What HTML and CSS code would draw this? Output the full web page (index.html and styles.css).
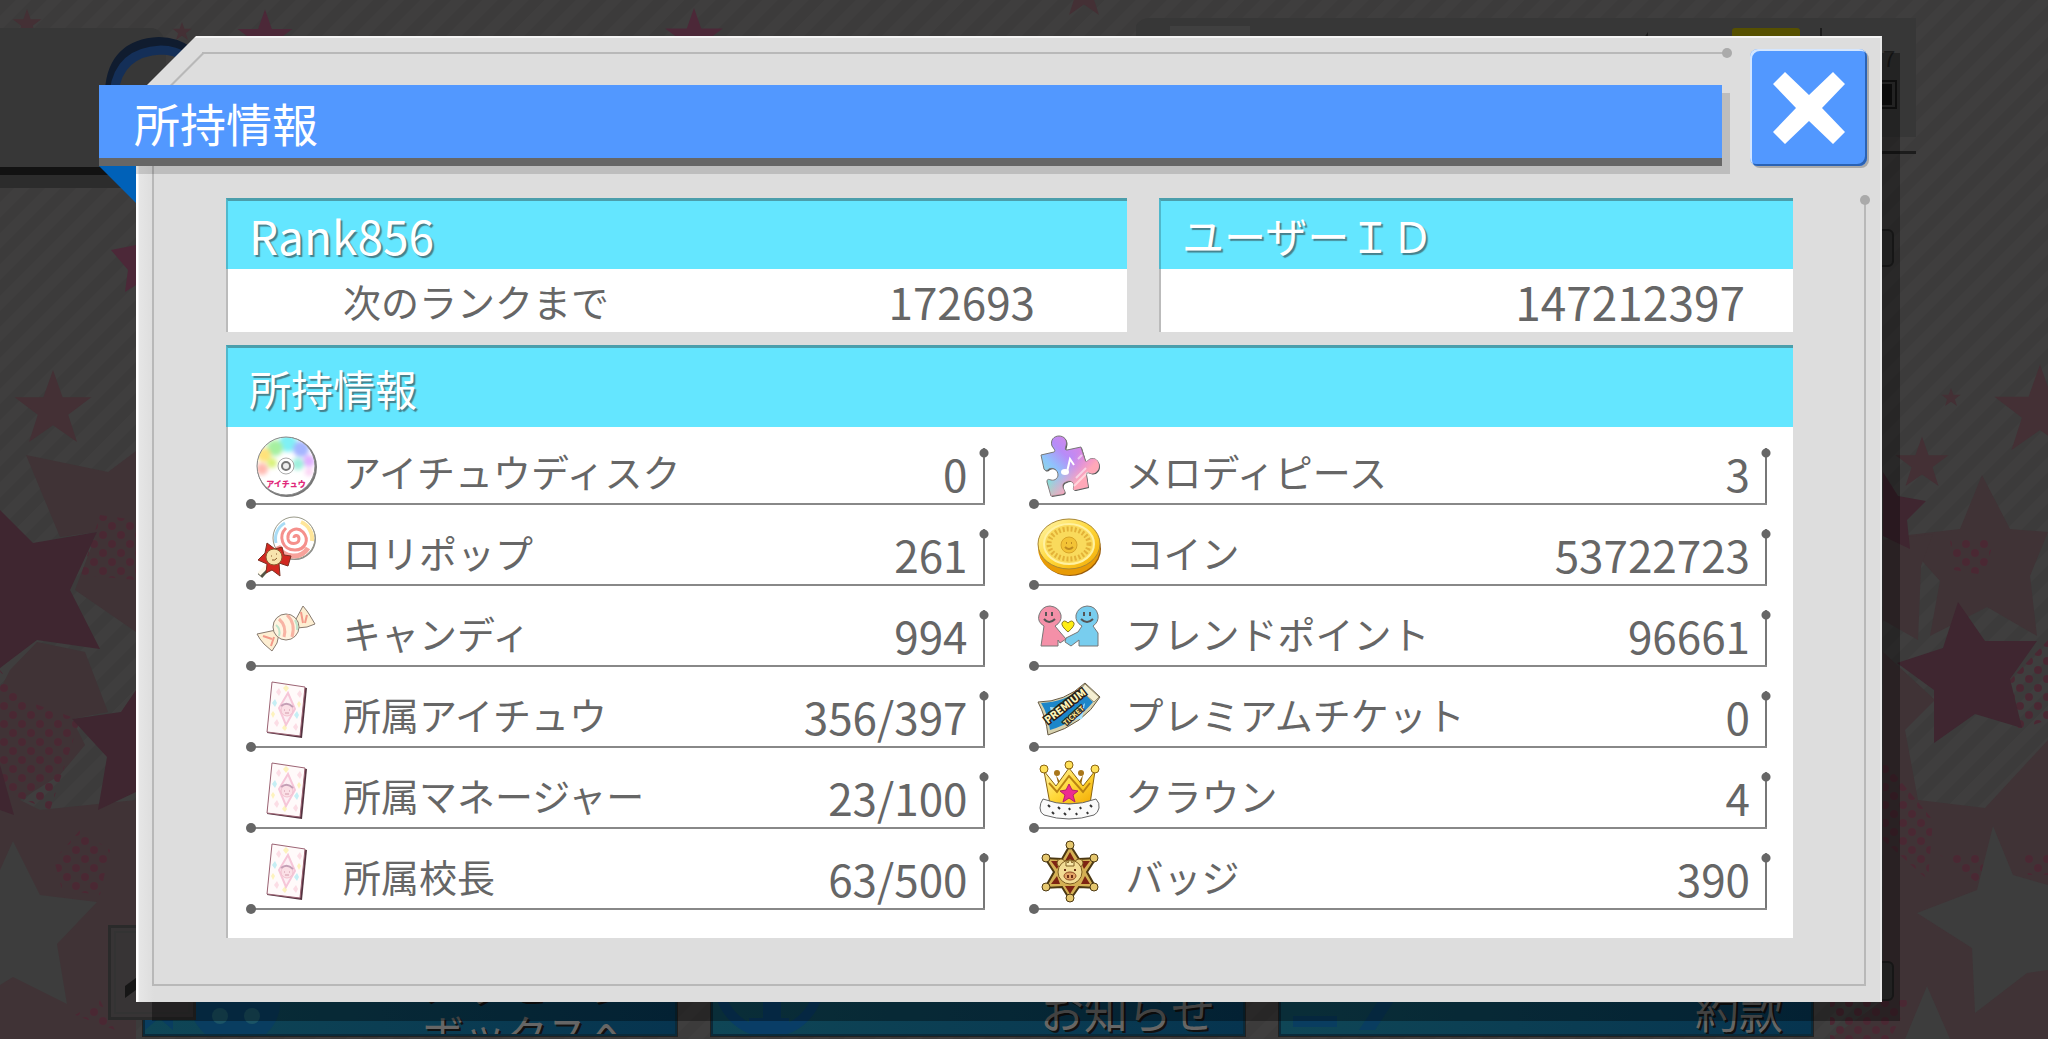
FILE: index.html
```html
<!DOCTYPE html>
<html lang="ja">
<head>
    <meta charset="UTF-8">
    <meta name="viewport" content="width=device-width, initial-scale=1.0">
    <title>所持情報</title>
    <link rel="stylesheet" href="styles.css">
</head>
<body>
    <!-- Dimmed screen behind the dialog -->
    <div class="backdrop">
        <svg class="scenery" viewBox="0 0 2048 1039" preserveAspectRatio="xMidYMid slice" aria-hidden="true">
            <defs>
                <pattern id="dots" width="18" height="18" patternUnits="userSpaceOnUse">
                    <circle cx="4" cy="4" r="4" fill="#4a2833"/>
                    <circle cx="13" cy="13" r="4" fill="#4a2833"/>
                </pattern>
                <pattern id="stripes" width="22" height="22" patternUnits="userSpaceOnUse" patternTransform="rotate(45)">
                    <rect width="22" height="22" fill="#3f3e3e"/>
                    <rect width="11" height="22" fill="#3c3b3b"/>
                </pattern>
                <polygon id="star" points="0,-50 12,-16 48,-16 19,6 30,40 0,19 -30,40 -19,6 -48,-16 -12,-16"/>
            </defs>
            <rect width="2048" height="1039" fill="url(#stripes)"/>
            <g fill="#4c2838">
                <use href="#star" transform="translate(265 38) scale(.57)"/>
                <use href="#star" transform="translate(694 38) scale(.6)"/>
                <path d="M111 250l25-5v40l-11 7 3-22z"/>
            </g>
            <g fill="#443035">
                <use href="#star" transform="translate(27 24) scale(.3)"/>
                <use href="#star" transform="translate(182 32) scale(.2)"/>
                <use href="#star" transform="translate(1084 -5) scale(.5)"/>
                <use href="#star" transform="translate(53 410) scale(.8)"/>
                <use href="#star" transform="translate(1951 398) scale(.2)"/>
                <use href="#star" transform="translate(1922 464) scale(.55)"/>
                <use href="#star" transform="translate(2040 412) scale(.95)"/>
            </g>
            <g fill="#403336">
                <path d="M26 455l82 17 28-21v181l-61-42 22-58-37 5z"/>
                <path d="M10 670l27-28 48 10 23 60-36 7 13 26-25 30-40 25-20-10V690z"/>
                <path d="M0 790l40 20 96-10v239H0z"/>
                <path d="M1982 475l28 54 38 3-18 44 7 60-50-29-57 29 10-55-40-45 60-7z"/>
                <path d="M1883 540l50-6-12 32-3 74-35-20zM1883 652l52 48-30 30 13 70 67 8 63-68v299h-218l53-39z"/>
            </g>
            <g fill="url(#dots)">
                <path d="M100 515l36 5v60l-55-5zM0 670l24 30 56 20-30 90-50-20zM80 830l30 20-10 45-38-5-8-30zM100 1000l15 30-40-15z"/>
                <path d="M1950 540h44l-10 35-30-5zM1883 760l50 60-5 60-45-40zM2010 680l38-40v80l-30 10zM1940 855h45l-5 30zM2020 855h28v20h-20zM1830 1000h80l-20 39h-60z"/>
            </g>
            <g fill="#3f2630">
                <path d="M0 510l33 33 64-11-27 58 30 59-63-9-37 28z"/>
                <path d="M136 690l-15 22-49 7 35 38-9 53 38-18zM0 765l14 50-14-5z"/>
                <path d="M1883 472l15 24 28 5-19 19 3 29-27-13z"/>
                <path d="M1958 602l27 39h52l-27 38 12 49-47-14-41 29v-53l-37-27 46-15z"/>
            </g>
            <g fill="#3d3d3d">
                <path d="M13 841l27 54 57 7-40 42 10 60-54-27-13 8V870z"/>
                <path d="M1993 826l20 49 35 10v85l-21 3-52 40-3-65-55-35 60-23zM1927 986l23 53h-45z"/>
            </g>
            <!-- top bar pieces -->
            <path d="M0 28h150q14 0 16 20v119H0z" fill="#373737"/>
            <path d="M0 167h140v8H0z" fill="#121212"/>
            <path d="M0 175h140v13H0z" fill="#2c2c2c"/>
            <path d="M112 90q3-44 47-46 16 0 30 10" fill="none" stroke="#101c2f" stroke-width="14"/>
            <path d="M114 92q5-40 47-42 14 0 26 8" fill="none" stroke="#142f58" stroke-width="9"/>
            <path d="M1136 26q4-8 14-8h766v119H1136z" fill="#373737"/>
            <path d="M1170 26h80v12h-80z" fill="#404040"/>
            <rect x="1732" y="28" width="68" height="12" rx="3" fill="#565000"/>
            <path d="M1820 28h2v10h-2zM1882 151h34v3h-34zM1644 38l4-6v6z" fill="#1c1c1c"/>
            <path d="M1860 81h36v27h-36z" fill="none" stroke="#161616" stroke-width="2"/>
            <path d="M1860 84h32v21h-32z" fill="#111"/>
            <text x="1883" y="67" font-size="22" fill="#1c1c1c">7</text>
            <rect x="1850" y="230" width="43" height="36" rx="5" fill="#333" stroke="#222" stroke-width="2"/>
            <rect x="1850" y="962" width="43" height="38" rx="5" fill="#333" stroke="#222" stroke-width="2"/>
        </svg>
        <nav class="menu">
            <button class="menu-item menu-message">
                <svg width="140" height="80" viewBox="0 0 140 80" aria-hidden="true"><path d="M0 48l16 14 12-10v24L14 64 0 76z" fill="#093d60"/><path d="M45 0h90v50q0 16-14 30H60Q45 66 45 50z" fill="#093d60"/><circle cx="75" cy="62" r="8" fill="#1b5466"/><circle cx="107" cy="62" r="8" fill="#1b5466"/></svg>
                <span>メッセージ<br>ボックスへ</span>
            </button>
            <button class="menu-item">
                <svg width="130" height="80" viewBox="0 0 130 80" aria-hidden="true"><circle cx="56" cy="28" r="50" fill="none" stroke="#093d66" stroke-width="10"/><path d="M40 30h28v34h8v9H36v-9h14V40H40z" fill="#093d66"/></svg>
                <span>お知らせ</span>
            </button>
            <button class="menu-item">
                <svg width="140" height="80" viewBox="0 0 140 80" aria-hidden="true"><path d="M12 36h60v11H12zM12 62h44v11H12zM78 76l38-58h16L94 76z" fill="#093d60"/></svg>
                <span>約款</span>
            </button>
        </nav>
        <div class="back-box">
            <svg width="60" height="40" viewBox="0 0 60 40" aria-hidden="true"><path d="M0 24L30 2v12L0 36z" fill="#161616"/></svg>
        </div>
    </div>

    <!-- Dialog -->
    <main class="dialog">
        <div class="panel-shadow"></div>
        <div class="panel"></div>
        <div class="frame-top"></div>
        <div class="frame-corner"></div>
        <div class="frame-body"></div>
        <div class="frame-right"></div>

        <header class="dialog-head">
            <h1>所持情報</h1>
            <button class="close" aria-label="閉じる">
                <svg width="76" height="76" viewBox="0 0 76 76" aria-hidden="true"><path d="M14 2l24 23L62 2l12 12-23 24 23 24-12 12-24-23-24 23L2 62l23-24L2 14z" fill="#fff"/></svg>
            </button>
        </header>

        <div class="cards">
            <section class="card">
                <h2 class="rank-title">Rank856</h2>
                <p class="summary rank"><span>次のランクまで</span><span class="num">172693</span></p>
            </section>
            <section class="card">
                <h2>ユーザーＩＤ</h2>
                <p class="summary user"><span class="user-id">147212397</span></p>
            </section>
            <section class="card wide">
                <h2>所持情報</h2>
                <dl class="items">
                    <div class="item">
                        <dt>
                            <svg class="icon" viewBox="0 0 62 62" aria-hidden="true">
                                <defs>
                                    <clipPath id="discClip"><circle cx="31" cy="31" r="29"/></clipPath>
                                    <filter id="soft"><feGaussianBlur stdDeviation="2"/></filter>
                                </defs>
                                <circle cx="32" cy="32" r="30" fill="#777"/>
                                <circle cx="31" cy="31" r="29" fill="#fff"/>
                                <g clip-path="url(#discClip)" filter="url(#soft)">
                                    <circle cx="33" cy="8" r="9" fill="#7ff0f5"/><circle cx="20" cy="13" r="8" fill="#a6f0a0"/>
                                    <circle cx="9" cy="20" r="7" fill="#ffe27a"/><circle cx="7" cy="34" r="6" fill="#ffb9b0"/>
                                    <circle cx="17" cy="28" r="5" fill="#d9f37a"/><circle cx="46" cy="14" r="8" fill="#a5b5ff"/>
                                    <circle cx="54" cy="26" r="6" fill="#e0b0ff"/><circle cx="43" cy="29" r="6" fill="#9df0dd"/>
                                    <circle cx="54" cy="37" r="4" fill="#fbd3f4"/>
                                </g>
                                <circle cx="31" cy="31" r="29" fill="none" stroke="#888"/>
                                <circle cx="31" cy="31" r="8" fill="#fff" stroke="#aaa"/><circle cx="31" cy="31" r="4" fill="#eee" stroke="#777" stroke-width="2"/>
                                <text x="31" y="52" text-anchor="middle" font-size="8" font-weight="900" fill="#e0287a">アイチュウ</text>
                            </svg>
                            アイチュウディスク
                        </dt>
                        <dd>0</dd>
                    </div>
                    <div class="item">
                        <dt>
                            <svg class="icon" viewBox="0 0 62 62" aria-hidden="true">
                                <path d="M28 35L5 60" stroke="#554" stroke-width="6"/><path d="M28 34L4 58" stroke="#fff8e8" stroke-width="4"/>
                                <circle cx="40" cy="23" r="21" fill="#888"/>
                                <circle cx="39" cy="22" r="21" fill="#fff" stroke="#998"/>
                                <path d="M39 22c0-4 5-3 5 1 0 6-10 6-11 0-1-9 9-13 15-7 7 8 2 18-8 18-13 0-17-14-9-22" fill="none" stroke="#f5908c" stroke-width="3"/>
                                <path d="M23 30A17 17 0 0 0 53 32" fill="none" stroke="#f7a29b" stroke-width="5"/>
                                <path d="M57 25A18 18 0 0 0 46 6" fill="none" stroke="#ffe69a" stroke-width="4"/>
                                <path d="M21 27A18 18 0 0 1 30 7" fill="none" stroke="#a9dcf5" stroke-width="3"/>
                                <path d="M12 27l8 6 7-2 2 8 7 1-3 10-9-3 1 13-8-6-6 3 1-9-9-4 7-7z" fill="#d22820" stroke="#7c3022"/>
                                <circle cx="19" cy="41" r="8" fill="#f8e4ad" stroke="#8a5b2e"/>
                                <path d="M16 40h1M21 38h1M17 44q3 1 5-2" stroke="#8a5b2e" fill="none"/>
                            </svg>
                            ロリポップ
                        </dt>
                        <dd>261</dd>
                    </div>
                    <div class="item">
                        <dt>
                            <svg class="icon" viewBox="0 0 62 62" aria-hidden="true">
                                <g stroke="#887b70" stroke-linejoin="round">
                                    <path d="M40 24l8-15 4 5 2 3 6 10-8 3-10 1z" fill="#fdeed2"/>
                                    <path d="M21 33L2 37l3 5 4 5 8 7 5-8 2-9z" fill="#fdeed2"/>
                                    <circle cx="31" cy="30" r="13" fill="#fff4e0"/>
                                </g>
                                <path d="M24 22q8 7 5 18M32 18q9 8 5 22" fill="none" stroke="#f8b4a4" stroke-width="3"/>
                                <path d="M21 28q5 4 3 11M40 23q3 5 2 10" fill="none" stroke="#bfe4cb" stroke-width="2"/>
                                <path d="M46 15l2 11M52 18l-2 8M8 39l9 3M16 49l3-9" stroke="#f39a8a" stroke-width="2"/>
                            </svg>
                            キャンディ
                        </dt>
                        <dd>994</dd>
                    </div>
                    <div class="item">
                        <dt>
                            <svg class="icon" viewBox="0 0 62 62" aria-hidden="true">
                                <g id="idolCard">
                                    <path d="M18 5l34 5-5 50-35-5z" fill="#54323f"/>
                                    <path d="M17 4l33 5-5 49-33-4z" fill="#fffafa" stroke="#9c6474"/>
                                    <path d="M21 14l3-4 2 4-2 4zM42 16l3-4 2 4-2 4zM19 45l3-4 2 4-2 4zM38 49l3-4 2 4-2 4z" fill="#fcdde5"/>
                                    <path d="M17 25l3-4 2 4-2 4zM39 37l3-4 2 4-2 4z" fill="#c6eff5"/>
                                    <path d="M28 10l3-3 3 3-3 4zM42 26l2-3 2 3-2 4zM16 36l2-3 2 3-2 4zM27 50l3-4 2 4-2 3z" fill="#fdf3be"/>
                                    <path d="M33 15l7 16-9 16-7-17z" fill="#fdeff4" stroke="#f6c6d8" stroke-width="2"/>
                                    <circle cx="32" cy="32" r="6" fill="#fbdfe6" stroke="#f2c1ce"/>
                                    <path d="M26 28q6-5 12 1" fill="none" stroke="#c5a0b6" stroke-width="2"/>
                                    <path d="M29 32h1M34 32h1M30 35h4" stroke="#d29aaa"/>
                                </g>
                            </svg>
                            所属アイチュウ
                        </dt>
                        <dd>356/397</dd>
                    </div>
                    <div class="item">
                        <dt>
                            <svg class="icon" viewBox="0 0 62 62" aria-hidden="true"><use href="#idolCard"/></svg>
                            所属マネージャー
                        </dt>
                        <dd>23/100</dd>
                    </div>
                    <div class="item">
                        <dt>
                            <svg class="icon" viewBox="0 0 62 62" aria-hidden="true"><use href="#idolCard"/></svg>
                            所属校長
                        </dt>
                        <dd>63/500</dd>
                    </div>
                    <div class="item">
                        <dt>
                            <svg class="icon" viewBox="0 0 62 62" aria-hidden="true">
                                <defs>
                                    <linearGradient id="puzzle" x1="0" y1="1" x2="1" y2="0">
                                        <stop offset="0" stop-color="#8ff5b5"/><stop offset=".35" stop-color="#8ec5fb"/>
                                        <stop offset=".55" stop-color="#b78cf8"/><stop offset="1" stop-color="#ff7fd0"/>
                                    </linearGradient>
                                    <linearGradient id="puzzleWarm" x1="0" y1="0" x2="1" y2="1">
                                        <stop offset=".45" stop-color="#ff90c8" stop-opacity="0"/><stop offset=".7" stop-color="#ffa8b8"/>
                                    </linearGradient>
                                    <path id="piece" d="M3 20l13-3c2-1 0-3-2-6-2-6 2-10 7-10s9 4 7 10c-1 3-1 4 1 4l14-3 4 13c1 3 2 1 5-1 5-2 9 2 9 7s-5 9-9 7c-2-1-4-1-4 1l2 13-13 3c-2 0-2-1-1-4 0-5-5-6-8-4-4 1-4 5-2 8 1 2 1 3-1 4l-12 2-4-14c0-3 1-3 4-2 4 1 7-2 7-5 0-5-5-8-9-6-2 2-4 2-5 0z"/>
                                </defs>
                                <use href="#piece" x="1" y="1" fill="#555"/>
                                <use href="#piece" fill="url(#puzzle)" stroke="#777"/>
                                <use href="#piece" fill="url(#puzzleWarm)"/>
                                <path d="M36 51l14-14M38 43l10-10M40 24l4-4" stroke="#fff" stroke-opacity=".5" stroke-width="2"/>
                                <ellipse cx="27" cy="37" rx="4" ry="3" fill="#fff"/><path d="M29 37l3-13 4 6" fill="none" stroke="#fff" stroke-width="2"/>
                            </svg>
                            メロディピース
                        </dt>
                        <dd>3</dd>
                    </div>
                    <div class="item">
                        <dt>
                            <svg class="icon" viewBox="0 0 62 62" aria-hidden="true">
                                <defs>
                                    <linearGradient id="gold" x1="0" y1="0" x2="1" y2="1">
                                        <stop offset="0" stop-color="#fff6b0"/><stop offset=".5" stop-color="#ffd83a"/><stop offset="1" stop-color="#f2a800"/>
                                    </linearGradient>
                                </defs>
                                <ellipse cx="32" cy="33" rx="31" ry="27" fill="#9a5c0a"/>
                                <ellipse cx="31" cy="32" rx="31" ry="27" fill="#e89b06"/>
                                <ellipse cx="31" cy="28" rx="31" ry="25" fill="url(#gold)" stroke="#a98733"/>
                                <ellipse cx="31" cy="28" rx="25" ry="20" fill="#f9da5c" stroke="#fff1a0" stroke-width="2"/>
                                <ellipse cx="31" cy="28" rx="20" ry="15" fill="none" stroke="#e3b238" stroke-width="5" stroke-dasharray="2 2"/>
                                <circle cx="31" cy="29" r="8" fill="#f3c336" stroke="#d8a428"/>
                                <path d="M28 27h1M33 27h1M27 31q4 4 8 0" fill="none" stroke="#c08c20" stroke-width="2"/>
                            </svg>
                            コイン
                        </dt>
                        <dd>53722723</dd>
                    </div>
                    <div class="item">
                        <dt>
                            <svg class="icon" viewBox="0 0 62 62" aria-hidden="true">
                                <path d="M6 29Q-1 25 1 18q3-9 11-9 9 1 11 9 1 7-6 11l5 6 6 7-6 4-2-3v6H3z" fill="#f490a8" stroke="#777"/>
                                <path d="M44 29q-7-4-6-11 2-8 11-9 9 0 11 9 1 7-5 11l5 7v13H41v-6l-8 6-6-4 1-4 12-6z" fill="#78cdee" stroke="#777"/>
                                <path d="M6 22q5 6 11 0M43 22q6 6 12 0" fill="none" stroke="#555" stroke-width="2"/>
                                <path d="M8 15v4M14 15v4M46 15v4M52 15v4" stroke="#555" stroke-width="2"/>
                                <path d="M30 35q-7-6-6-9 2-4 6 0 4-4 6 0 1 3-6 9z" fill="#ffee12" stroke="#887a20"/>
                            </svg>
                            フレンドポイント
                        </dt>
                        <dd>96661</dd>
                    </div>
                    <div class="item">
                        <dt>
                            <svg class="icon" viewBox="0 0 62 62" aria-hidden="true">
                                <path d="M0 24q27 0 47-19l15 14Q46 46 10 57q-2-18-10-33z" fill="#d7d1ae" stroke="#665a44"/>
                                <path d="M3 25q24-1 39-14l13 13Q39 44 12 52 10 36 3 25z" fill="#1c86c9"/>
                                <path d="M12 29l10 1-8 9zM30 42l17-17-3 16z" fill="#a6e1fa"/>
                                <path d="M47 6l14 13-5 5-14-12z" fill="#f5efd2" stroke="#998f70"/>
                                <text x="10" y="46" transform="rotate(-38 10 46)" font-size="10" font-weight="900" fill="#fff4b8" stroke="#262018" stroke-width="3" paint-order="stroke">PREMIUM</text>
                                <text x="28" y="48" transform="rotate(-42 28 48)" font-size="7" font-weight="900" fill="#f1dc8c" stroke="#262018" stroke-width="2" paint-order="stroke">TICKET</text>
                            </svg>
                            プレミアムチケット
                        </dt>
                        <dd>0</dd>
                    </div>
                    <div class="item">
                        <dt>
                            <svg class="icon" viewBox="0 0 62 62" aria-hidden="true">
                                <path d="M18 16l4 16h20l3-16-7 12H25z" fill="#9c6c12"/>
                                <circle cx="19" cy="14" r="3" fill="#a9761a"/><circle cx="43" cy="14" r="3" fill="#a9761a"/>
                                <path d="M6 12l12 15L31 9l14 18 12-15-5 33H12z" fill="url(#gold)" stroke="#8a6412"/>
                                <path d="M11 24l8 9 12-16 14 16 7-9" fill="none" stroke="#b98212" stroke-width="2"/>
                                <circle cx="6" cy="10" r="4" fill="#ffe15a" stroke="#8a6412"/><circle cx="31" cy="6" r="4" fill="#ffe15a" stroke="#8a6412"/><circle cx="57" cy="10" r="4" fill="#ffe15a" stroke="#8a6412"/>
                                <path d="M31 25l3 6 6 1-5 4 2 7-6-4-6 4 2-7-5-4 6-1z" fill="#ee2a91" stroke="#b32069"/>
                                <path d="M5 40q26 10 53 0 4 4 3 9t-5 7q-25 8-50 0-4-2-4-7t3-9z" fill="#fafafa" stroke="#666"/>
                                <path d="M10 46l2 2M20 48l2 2M31 49l1 2M42 48l1 2M52 46l2 2M14 53l2 2M26 54l2 2M38 54l1 2M49 53l1 2" stroke="#333" stroke-width="2"/>
                            </svg>
                            クラウン
                        </dt>
                        <dd>4</dd>
                    </div>
                    <div class="item">
                        <dt>
                            <svg class="icon" viewBox="0 0 62 62" aria-hidden="true">
                                <path d="M32 5l9 14 17-1-9 14 9 16-17-1-9 13-8-13-17 1 9-16-9-14 17 1z" fill="#d4b054" stroke="#4c3812" stroke-width="2"/>
                                <path d="M32 12l5 9H27zM13 21h10l-4 8zM52 21H42l4 8zM13 44h9l-3-8zM52 44h-9l4-8zM32 54l5-8H27z" fill="#7d2413"/>
                                <g fill="#e5c76e" stroke="#4c3812"><circle cx="32" cy="5" r="4"/><circle cx="8" cy="18" r="4"/><circle cx="56" cy="18" r="4"/><circle cx="8" cy="47" r="4"/><circle cx="56" cy="47" r="4"/><circle cx="32" cy="58" r="4"/></g>
                                <circle cx="23" cy="23" r="4" fill="#e9cf80" stroke="#7d5c20"/><circle cx="41" cy="23" r="4" fill="#e9cf80" stroke="#7d5c20"/>
                                <circle cx="32" cy="32" r="12" fill="#f2dc94" stroke="#7d5c20"/>
                                <path d="M28 20l2 3 2-4 2 4 2-3v6h-8z" fill="#f8e8a8" stroke="#7d5c20"/>
                                <ellipse cx="32" cy="36" rx="6" ry="4" fill="#e2a465" stroke="#8c4a24"/><path d="M30 35v3M34 35v3M26 30h2M36 30h2" stroke="#6d3018" stroke-width="2"/>
                            </svg>
                            バッジ
                        </dt>
                        <dd>390</dd>
                    </div>
                </dl>
            </section>
        </div>
    </main>
</body>
</html>
```

FILE: styles.css
```css
* {
    box-sizing: border-box;
}
body {
    font-family: "Noto Sans CJK JP", sans-serif;
    background-color: #3d3d3d;
    color: #666;
    margin: 0;
    padding: 0;
    min-height: 100vh;
    position: relative;
    overflow: hidden;
}
h1, h2, p, dl, dd {
    margin: 0;
    font-weight: 400;
}
button {
    font-family: inherit;
    border: 0;
    padding: 0;
    cursor: pointer;
}

/* screen behind */
.backdrop {
    position: absolute;
    inset: 0;
    overflow: hidden;
}
.scenery {
    display: block;
    width: 100%;
    height: 100%;
}
.menu {
    position: absolute;
    left: 143px;
    right: 235px;
    bottom: 3px;
    display: grid;
    grid-template-columns: repeat(3, 1fr);
    gap: 34px;
}
.menu-item {
    display: flex;
    justify-content: space-between;
    align-items: flex-end;
    height: 84px;
    padding: 0 28px 0 0;
    overflow: hidden;
    color: #666;
    font-size: 44px;
    line-height: 48px;
    text-shadow: 2px 2px 0 #111;
    background: linear-gradient(90deg, #0f4656, #06344f);
    border: 2px solid #0a2a3a;
    outline: 1px solid #222;
}
.menu-message {
    font-size: 42px;
    line-height: 50px;
}
.menu-message span {
    margin-right: 16px;
    margin-bottom: -24px;
    text-align: left;
}
.back-box {
    position: absolute;
    left: 108px;
    bottom: 19px;
    width: 88px;
    height: 95px;
    padding: 34px 14px;
    background-color: #373435;
    border: 3px solid #2a2a2a;
    outline: 2px solid #333;
    outline-offset: -8px;
}

/* dialog */
.dialog {
    position: relative;
    margin: 36px 166px 0 136px;
    padding-bottom: 64px;
}
.panel-shadow {
    position: absolute;
    inset: 17px -18px -19px 16px;
    background-color: rgba(0, 0, 0, 0.35);
    clip-path: polygon(60px 0, 100% 0, 100% 100%, 0 100%, 0 60px);
}
.panel {
    position: absolute;
    inset: 0;
    background: linear-gradient(90deg, #fff 2px, #e6e6e6 3px, #ddd 18px);
    border-top: 2px solid #f4f4f4;
    border-right: 2px solid #e8e8e8;
    clip-path: polygon(60px 0, 100% 0, 100% 100%, 0 100%, 0 60px);
}
.frame-top {
    position: absolute;
    top: 16px;
    left: 66px;
    right: 154px;
    height: 2px;
    background-color: #b8b8b8;
}
.frame-top::after, .frame-right::after {
    content: "";
    position: absolute;
    top: -4px;
    right: -4px;
    width: 10px;
    height: 10px;
    border-radius: 50%;
    background-color: #aaa;
}
.frame-corner {
    position: absolute;
    top: 16px;
    left: 20px;
    width: 47px;
    height: 2px;
    background-color: #b8b8b8;
    transform: rotate(-45deg);
    transform-origin: right top;
}
.frame-body {
    position: absolute;
    inset: 120px 17px 16px 16px;
    border: solid #b8b8b8;
    border-width: 0 0 2px 2px;
}
.frame-right {
    position: absolute;
    top: 163px;
    right: 16px;
    bottom: 16px;
    width: 2px;
    background-color: #b8b8b8;
}
.dialog-head {
    position: relative;
    display: flex;
    align-items: flex-end;
    gap: 28px;
    padding: 13px 15px 0 0;
}
.dialog-head h1 {
    position: relative;
    flex: 1;
    height: 81px;
    margin-left: -37px;
    padding-left: 35px;
    color: #fff;
    font-size: 46px;
    line-height: 74px;
    background-color: #5298ff;
    border-bottom: 8px solid #666;
    box-shadow: 8px 8px 0 rgba(0, 0, 0, 0.14);
}
.dialog-head h1::before {
    content: "";
    position: absolute;
    top: 81px;
    left: 0;
    width: 37px;
    height: 37px;
    background-color: #0061b8;
    clip-path: polygon(0 0, 100% 0, 100% 100%);
}
.close {
    display: flex;
    justify-content: center;
    align-items: center;
    width: 117px;
    height: 117px;
    background-color: #5298ff;
    border-radius: 8px;
    box-shadow: inset 2px 2px 0 #d4e6ff, inset -2px -2px 0 #2a62b4, 2px 2px 0 #aaa;
}
.cards {
    position: relative;
    display: grid;
    grid-template-columns: 901fr 634fr;
    gap: 13px 32px;
    margin: 32px 89px 0 90px;
}
.card {
    background-color: #fff;
    border-left: 2px solid #bbb;
}
.wide {
    grid-column: 1 / -1;
}
.card h2 {
    height: 71px;
    margin-left: -2px;
    padding-left: 21px;
    color: #fff;
    font-size: 42px;
    line-height: 68px;
    text-shadow: 2px 2px 1px #46808c;
    background-color: #64e6ff;
    border-top: 3px solid #4b9eab;
    border-left: 2px solid #50b8cc;
}
.card .rank-title {
    font-size: 46px;
}
.card.wide h2 {
    height: 82px;
    line-height: 80px;
}
.summary {
    display: flex;
    align-items: center;
    height: 63px;
    font-size: 38px;
    line-height: 62px;
}
.rank {
    justify-content: space-between;
    padding: 0 92px 0 115px;
}
.user {
    justify-content: flex-end;
    padding-right: 48px;
}
.num {
    font-size: 44px;
}
.user-id {
    font-size: 46px;
    line-height: 58px;
}
.items {
    display: grid;
    grid-template-columns: 1fr 1fr;
    grid-template-rows: repeat(6, 72px);
    grid-auto-flow: column;
    gap: 9px 49px;
    padding: 6px 26px 28px 23px;
}
.item {
    position: relative;
    display: flex;
    justify-content: space-between;
    align-items: flex-start;
    padding: 0 17px 0 4px;
    border-bottom: 2px solid #888;
}
.item::before {
    content: "";
    position: absolute;
    left: -5px;
    bottom: -6px;
    width: 10px;
    height: 10px;
    border-radius: 50%;
    background-color: #666;
}
.item::after {
    content: "";
    position: absolute;
    top: 15px;
    right: -4px;
    bottom: 0;
    width: 10px;
    background: radial-gradient(circle at 5px 5px, #666 4px, transparent 5px), linear-gradient(#777, #777) center / 2px 100% no-repeat;
}
.item dt {
    display: flex;
    align-items: flex-start;
    gap: 26px;
    font-size: 38px;
    line-height: 76px;
}
.item dd {
    font-size: 44px;
    line-height: 80px;
}
.icon {
    width: 62px;
    height: 62px;
    margin-top: 2px;
    overflow: visible;
}
```
